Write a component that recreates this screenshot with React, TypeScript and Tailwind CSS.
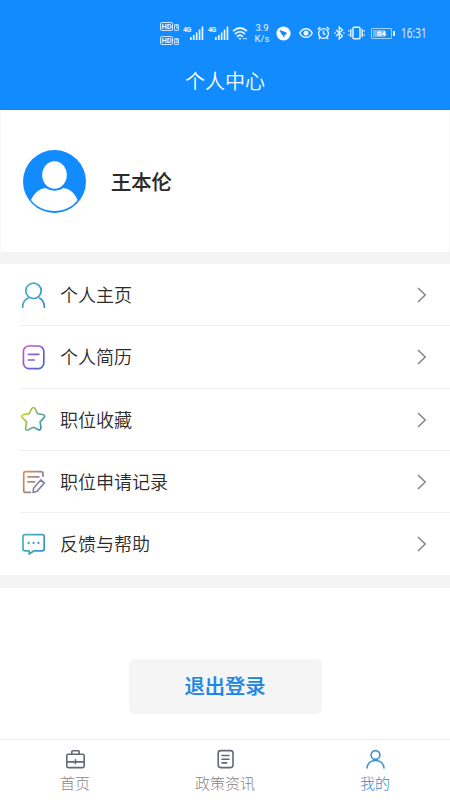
import React from "react";

const Signal: React.FC = () => (
  <div className="flex h-[15px] w-[21px] shrink-0">
    <span className="w-[7px] text-[7px] leading-[8px] font-bold tracking-[-0.5px]">4G</span>
    <svg width="14" height="15" viewBox="0 0 14 15" fill="currentColor">
      <rect x="0" y="11" width="1.7" height="3" />
      <rect x="2.9" y="9" width="1.7" height="5" />
      <rect x="5.8" y="6.5" width="1.7" height="7.5" />
      <rect x="8.7" y="3.5" width="1.7" height="10.5" />
      <rect x="11.6" y="0.5" width="1.7" height="13.5" />
    </svg>
  </div>
);

const HdBadge: React.FC<{ n: string }> = ({ n }) => (
  <div className="flex h-[9px] items-end gap-px">
    <span className="h-[9px] w-[13px] rounded-[2px] border border-white/80 text-center text-[7.5px] leading-[7px] font-bold">HD</span>
    <span className="h-[7px] w-[5px] rounded-[1px] border border-white/70 text-center text-[5.5px] leading-[5px] font-bold">{n}</span>
  </div>
);

const StatusBar: React.FC = () => (
  <div className="flex h-[66px] items-center pl-[160px] text-white/90 font-['Roboto',sans-serif]">
    <div className="flex w-[19px] shrink-0 flex-col gap-[5px]">
      <HdBadge n="1" />
      <HdBadge n="2" />
    </div>
    <div className="ml-[4px] flex gap-[4px]">
      <Signal />
      <Signal />
    </div>
    <svg className="ml-[3px] shrink-0" width="16" height="15" viewBox="0 0 16 15" fill="none" stroke="currentColor" strokeWidth="1.7">
      <path d="M1 5.2Q8 -1.2 15 5.2M3 8Q8 3.4 13 8M5 10.7Q8 7.8 11 10.7" />
      <path d="M6.500 12 8 14l1.500-2Z" fill="currentColor" stroke="none" />
      <path d="M11 12.600h4" strokeWidth="1.300" strokeDasharray="1.500 0.800" />
    </svg>
    <div className="ml-[3px] w-[22px] shrink-0 text-center text-[9.5px] leading-[11px]">
      3.9<br />K/s
    </div>
    <svg className="ml-[3px] shrink-0" width="15" height="15" viewBox="0 0 15 15">
      <circle cx="7.5" cy="7.5" r="7.1" fill="white" />
      <path d="M3.7 4.1c2 .5 5 1.5 7.5 3.2L8.8 8.9l-.7 3.3-.8-2.3C5.3 8.5 4.3 6.4 3.7 4.1Z" fill="#128bff" />
    </svg>
    <svg className="ml-[8px] shrink-0" width="14" height="12" viewBox="0 0 14 12" fill="none" stroke="currentColor" strokeWidth="1.5">
      <path d="M.8 6C3.5.2 10.5.2 13.2 6 10.5 11.8 3.5 11.8.8 6Z" />
      <circle cx="7" cy="6" r="2.5" fill="currentColor" stroke="none" />
    </svg>
    <svg className="ml-[4px] shrink-0" width="13" height="14" viewBox="0 0 13 14" fill="none" stroke="currentColor" strokeWidth="1.4">
      <circle cx="6.5" cy="7.5" r="4.9" />
      <path d="M6.5 4.5v3.2l2 1M.8 3.5 3.3 1M12.2 3.5 9.7 1M3 11.5l-1.2 1.6M10 11.5l1.2 1.6" />
    </svg>
    <svg className="ml-[4px] shrink-0" width="11" height="14" viewBox="0 0 11 14" fill="none" stroke="currentColor" strokeWidth="1.3">
      <path d="m2 4 6.500 6-3.300 3V1l3.300 3L2 10" />
      <path d="M.4 7h1.300M9.300 7h1.300" strokeWidth="1.5" />
    </svg>
    <svg className="ml-[3px] shrink-0" width="17" height="14" viewBox="0 0 17 14" fill="none" stroke="currentColor" strokeWidth="1.5">
      <rect x="5" y="1.2" width="7" height="11.6" rx="1" />
      <path d="M2.8 3v8M14.2 3v8" strokeWidth="1.4" />
      <path d="M.8 4.2v1.6M.8 8.2v1.6M16.2 4.2v1.6M16.2 8.2v1.6" strokeWidth="1.2" />
    </svg>
    <div className="ml-[6px] flex shrink-0 items-center gap-px">
      <div className="relative h-[11px] w-[21px] rounded-[1px] border border-white/60 p-px">
        <div className="h-full w-[12px] bg-white/40" />
        <span className="absolute inset-0 text-center text-[8px] leading-[9px] font-bold text-white">64</span>
      </div>
      <div className="h-[5px] w-[1.5px] bg-white/90" />
    </div>
    <span className="ml-[6px] inline-block origin-left scale-x-[0.68] text-[14.5px] leading-none tracking-[0.2px] font-['Open_Sans',sans-serif]">16:31</span>
  </div>
);

const Gradient: React.FC<{ id: string; from: string; to: string }> = ({ id, from, to }) => (
  <defs>
    <linearGradient id={id} gradientUnits="userSpaceOnUse" x1="2" y1="6" x2="24" y2="20">
      <stop offset="0" stopColor={from} />
      <stop offset="1" stopColor={to} />
    </linearGradient>
  </defs>
);

const rows = [
  {
    label: "个人主页",
    from: "#45b5b5",
    to: "#378fdb",
    icon: (
      <>
        <circle cx="13.5" cy="8.8" r="7.7" />
        <path d="M2.6 25.2c0-4.2 2-7.5 5.6-9.2M24.4 25.2c0-4.2-1.7-7.2-5-9.1" />
      </>
    ),
  },
  {
    label: "个人简历",
    from: "#c95ac4",
    to: "#4764d0",
    icon: (
      <>
        <rect x="3.4" y="2" width="20.4" height="22.6" rx="5.5" />
        <path d="M8.4 10.3h10.4M8.4 16h5.8" />
      </>
    ),
  },
  {
    label: "职位收藏",
    from: "#d3d820",
    to: "#2792c8",
    icon: <path d="M11.500 3q1.900-3 3.800 0l2.200 4.600 5.200.9q3.200.9 1.100 3.400l-3.700 4 .8 5.500q.2 3.300-2.800 2.200L13.400 21.300 8.300 23.800q-3 1-2.700-2.200l1-5.500-4-4.200Q.6 9.300 3.700 8.500l5.500-.9Z" />,
  },
  {
    label: "职位申请记录",
    from: "#e48a4b",
    to: "#5f80c0",
    icon: (
      <>
        <path d="M23 7.200V4.600q0-2-2-2H5.700q-2 0-2 2v16.800q0 2 2 2h4.700M8 7.900h10.800M8 12.900h6.500" />
        <path d="m13.600 19 7.200-8 3.500 3-7.200 8.200-4 1.300Z" />
      </>
    ),
  },
  {
    label: "反馈与帮助",
    from: "#43bab5",
    to: "#3b8dc9",
    icon: (
      <>
        <path d="M5 3.600h17.200q2 0 2 2v12.200q0 2-2 2H14l-4.800 3.200v-3.200H5q-2 0-2-2V5.600q0-2 2-2Z" />
        <path d="M8.600 11.900h.1M13.500 11.900h.1M18.400 11.900h.1" strokeWidth="2.300" />
      </>
    ),
  },
];

const tabs = [
  {
    label: "首页",
    color: "text-[#858585]",
    icon: (
      <>
        <rect x="1.8" y="5.2" width="17.4" height="13.4" rx="1.5" />
        <path d="M6.8 5V2.8q0-1 1-1h5.4q1 0 1 1V5M2 12.9h17M10.5 10.8v3.8" />
      </>
    ),
    stroke: "#636a75",
  },
  {
    label: "政策资讯",
    color: "text-[#858585]",
    icon: (
      <>
        <rect x="3.2" y="1.6" width="14.8" height="17" rx="2.5" />
        <path d="M7 6.5h7M7 10.2h7M7 13.9h4.7" />
      </>
    ),
    stroke: "#636a75",
  },
  {
    label: "我的",
    color: "text-[#2f8dcc]",
    icon: (
      <>
        <circle cx="10.5" cy="6" r="4.4" />
        <path d="M2 19c.5-4.8 4-7.5 8.5-7.5s8 2.7 8.5 7.5" />
      </>
    ),
    stroke: "#3b92cc",
  },
];

const App: React.FC = () => (
  <div className="flex h-[800px] w-[450px] flex-col overflow-hidden bg-white font-['Noto_Sans_CJK_SC',sans-serif] text-[#2b2b2b]">
    <header className="h-[110px] shrink-0 bg-[#128bff] text-white">
      <StatusBar />
      <h1 className="text-center text-[20px] leading-[29px] font-[350]">个人中心</h1>
    </header>

    <section className="flex h-[142px] shrink-0 items-center border-x border-[#f7f7f7] pl-[22px]">
      <svg className="shrink-0" width="63" height="63" viewBox="0 0 63 63">
        <circle cx="31.5" cy="31.5" r="31.5" fill="#128bff" />
        <ellipse cx="31.5" cy="25" rx="12.3" ry="13.8" fill="white" />
        <path d="M8 50C12 41.500 17 39 22.500 38q9 5.500 18 0C46 39 51 41.500 54.500 50 49 57.500 40.500 61 31.500 61S14 57.500 8 50Z" fill="white" />
      </svg>
      <span className="ml-[25px] text-[20.3px] leading-[30px] font-medium [-webkit-text-stroke:0.2px_#2b2b2b]">王本伦</span>
    </section>

    <div className="h-3 shrink-0 bg-[#f4f4f4]" />

    <ul className="shrink-0">
      {rows.map((r, i) => (
        <React.Fragment key={r.label}>
          {i > 0 && <li className="-mt-px ml-5 h-px bg-[#efefef]" />}
          <li className="flex h-[62.3px] items-center pl-5">
            <svg className="shrink-0" width="27" height="27" viewBox="0 0 27 27" fill="none" stroke={`url(#row-${i})`} strokeWidth="1.7" strokeLinecap="round" strokeLinejoin="round">
              <Gradient id={`row-${i}`} from={r.from} to={r.to} />
              {r.icon}
            </svg>
            <span className="-mt-[2px] ml-[13px] flex-1 text-[18px] leading-[26px] font-[350]">{r.label}</span>
            <svg className="mr-[22px]" width="12" height="16" viewBox="0 0 12 16" fill="none" stroke="#888" strokeWidth="1.6">
              <path d="m2 1 7.2 7L2 15" />
            </svg>
          </li>
        </React.Fragment>
      ))}
    </ul>

    <div className="h-[13px] shrink-0 bg-[#f4f4f4]" />

    <div className="flex flex-1 justify-center pt-[71px]">
      <button className="h-[55px] w-[193px] rounded-[6px] bg-[#f5f5f5] pb-[4px] text-[20.3px] font-medium text-[#1b86e3] [-webkit-text-stroke:0.2px_#1b86e3]">退出登录</button>
    </div>

    <nav className="grid h-[61px] shrink-0 grid-cols-3 border-t border-[#ececec]">
      {tabs.map((t) => (
        <div key={t.label} className={`flex flex-col items-center pt-[9px] ${t.color}`}>
          <svg width="21" height="21" viewBox="0 0 21 21" fill="none" stroke={t.stroke} strokeWidth="1.6" strokeLinecap="round" strokeLinejoin="round">
            {t.icon}
          </svg>
          <span className="mt-[2px] text-[15px] leading-[22px] font-light">{t.label}</span>
        </div>
      ))}
    </nav>
  </div>
);

export default App;
